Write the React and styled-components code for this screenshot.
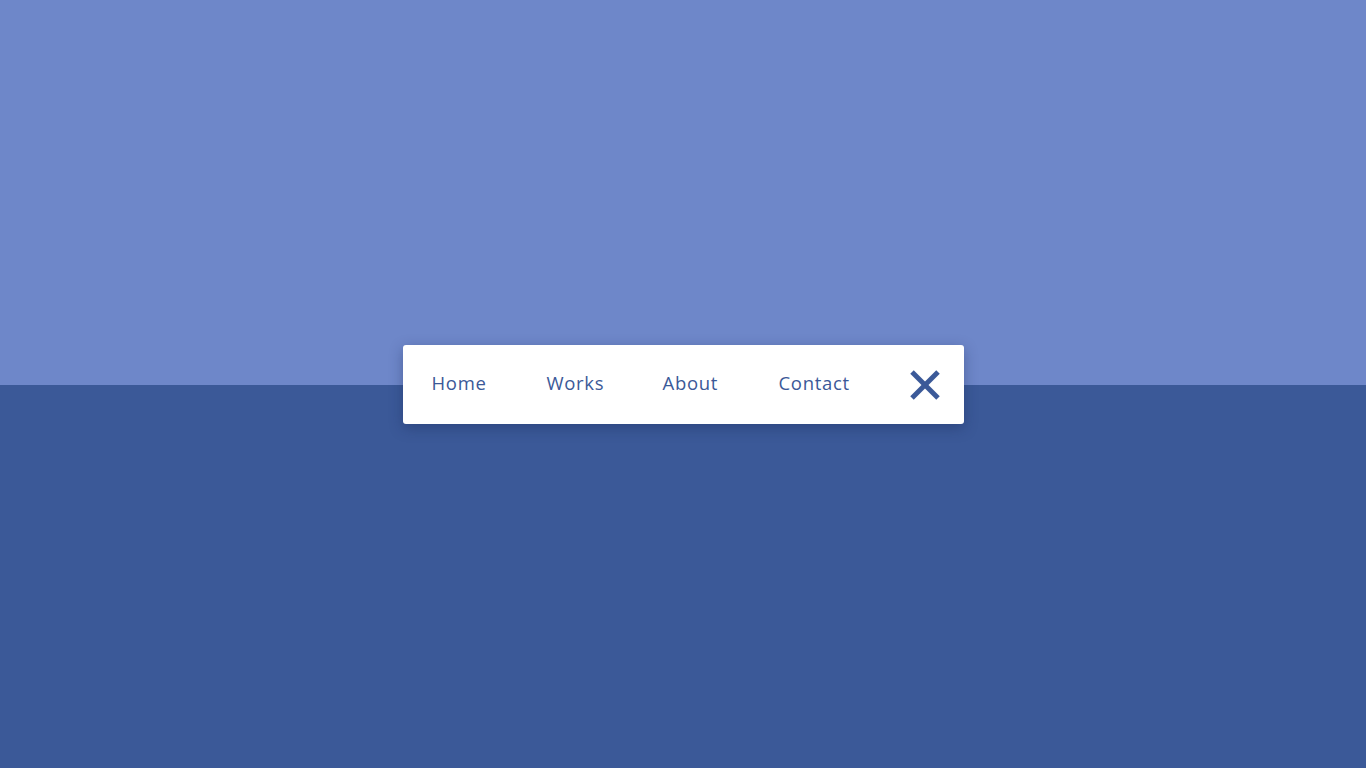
import React from "react";
import styled, { createGlobalStyle } from "styled-components";

const GlobalStyle = createGlobalStyle`
  html, body { margin: 0; padding: 0; }
  body { font-family: "Open Sans", "Noto Sans", sans-serif; }
`;

const Page = styled.div`
  width: 100vw;
  height: 100vh;
  display: flex;
  align-items: center;
  justify-content: center;
  background: linear-gradient(to bottom, #6e87c9 0, #6e87c9 385px, #3b5998 385px, #3b5998 100%);
`;

const Nav = styled.nav`
  display: flex;
  align-items: center;
  height: 79px;
  padding: 0 24px 0 0;
  background: #ffffff;
  border-radius: 3px;
  box-shadow: 0 4px 14px rgba(20, 35, 80, 0.35);
  box-sizing: border-box;
  margin-top: 1px;
`;

const NavLink = styled.a`
  display: block;
  box-sizing: border-box;
  width: ${(p) => p.$w}px;
  padding: 0 0 2px 29px;
  font-family: "Open Sans", "Noto Sans", sans-serif;
  font-size: 18.5px;
  letter-spacing: 0.7px;
  color: #3b5998;
  text-decoration: none;
  line-height: 1;
  white-space: nowrap;
  cursor: pointer;
`;

const CloseButton = styled.button`
  display: flex;
  align-items: center;
  justify-content: center;
  width: 30px;
  height: 30px;
  margin-left: 24px;
  padding: 0;
  border: 0;
  background: none;
  cursor: pointer;
`;

const links = [
  { label: "Home", w: 115 },
  { label: "Works", w: 116 },
  { label: "About", w: 116 },
  { label: "Contact", w: 136 },
];

export default function App() {
  return (
    <>
      <GlobalStyle />
      <Page>
        <Nav>
          {links.map((l) => (
            <NavLink key={l.label} href="#" $w={l.w}>{l.label}</NavLink>
          ))}
          <CloseButton aria-label="Close">
            <svg width="30" height="30" viewBox="0 0 30 30">
              <line x1="2" y1="2" x2="28" y2="28" stroke="#3b5998" strokeWidth="5" />
              <line x1="28" y1="2" x2="2" y2="28" stroke="#3b5998" strokeWidth="5" />
            </svg>
          </CloseButton>
        </Nav>
      </Page>
    </>
  );
}
